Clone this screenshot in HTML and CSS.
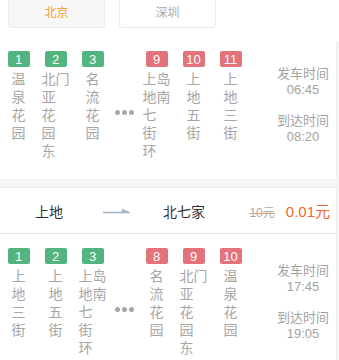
FILE: index.html
```html
<!DOCTYPE html>
<html lang="zh-CN">
<head>
    <meta charset="UTF-8">
    <meta name="viewport" content="width=device-width, initial-scale=1.0">
    <title>班车</title>
    <link rel="stylesheet" href="styles.css">
</head>
<body>
    <div class="tabs">
        <div class="tab active">北京</div>
        <div class="tab">深圳</div>
    </div>

    <div class="card">
        <div class="body first">
            <div class="route">
                <div class="stop"><span class="num go">1</span><span class="name">温<br>泉<br>花<br>园</span></div>
                <div class="stop"><span class="num go">2</span><span class="name">北门<br>亚<br>花<br>园<br>东</span></div>
                <div class="stop"><span class="num go">3</span><span class="name">名<br>流<br>花<br>园</span></div>
                <div class="more"><i></i><i></i><i></i></div>
                <div class="stop"><span class="num off">9</span><span class="name">上岛<br>地南<br>七<br>街<br>环</span></div>
                <div class="stop"><span class="num off">10</span><span class="name">上<br>地<br>五<br>街</span></div>
                <div class="stop"><span class="num off">11</span><span class="name">上<br>地<br>三<br>街</span></div>
            </div>
            <div class="times">
                <p>发车时间</p>
                <p class="t">06:45</p>
                <p class="arrive">到达时间</p>
                <p class="t">08:20</p>
            </div>
        </div>
    </div>

    <div class="card">
        <div class="trip">
            <span class="from">上地</span>
            <span class="arrow">
                <svg width="27" height="6" viewBox="0 0 27 6">
                    <path d="M0 4.5H27" stroke="#a3b6c9" stroke-width="1.6"/>
                    <path d="M19 0.5L27 4.5H19Z" fill="#a3b6c9"/>
                </svg>
            </span>
            <span class="to">北七家</span>
            <span class="price"><s>10元</s><b>0.01元</b></span>
        </div>
        <div class="body">
            <div class="route">
                <div class="stop"><span class="num go">1</span><span class="name">上<br>地<br>三<br>街</span></div>
                <div class="stop"><span class="num go">2</span><span class="name">上<br>地<br>五<br>街</span></div>
                <div class="stop"><span class="num go">3</span><span class="name">上岛<br>地南<br>七<br>街<br>环</span></div>
                <div class="more"><i></i><i></i><i></i></div>
                <div class="stop"><span class="num off">8</span><span class="name">名<br>流<br>花<br>园</span></div>
                <div class="stop"><span class="num off">9</span><span class="name">北门<br>亚<br>花<br>园<br>东</span></div>
                <div class="stop"><span class="num off">10</span><span class="name">温<br>泉<br>花<br>园</span></div>
            </div>
            <div class="times">
                <p>发车时间</p>
                <p class="t">17:45</p>
                <p class="arrive">到达时间</p>
                <p class="t">19:05</p>
            </div>
        </div>
    </div>
</body>
</html>
```

FILE: styles.css
```css
body {
    margin: 0;
    background-color: #f5f5f5;
    font-family: "Liberation Sans", "Noto Sans CJK SC", sans-serif;
    overflow: hidden;
}

p {
    margin: 0;
}

/* 城市切换 */
.tabs {
    display: flex;
    gap: 14px;
    padding: 0 0 14px 8px;
    margin-top: -4px;
    background-color: #fff;
}

.tab {
    width: 95px;
    height: 30px;
    line-height: 32px;
    text-align: center;
    font-size: 12px;
    color: #aaa;
    background-color: #fff;
    border: 1px solid #ececec;
    border-radius: 3px;
}

.tab.active {
    color: #f3a33c;
    background-color: #f7f7f7;
}

/* 线路卡片 */
.card {
    width: 336px;
    background-color: #fff;
    border-right: 1px solid #ebebeb;
    margin-bottom: 8px;
}

.trip {
    display: grid;
    grid-template-columns: 98px 36px 100px 1fr;
    align-items: center;
    height: 45px;
    border-top: 1px solid #ececec;
    border-bottom: 1px solid #e6e6e6;
    font-size: 14px;
    color: #333;
    text-align: center;
}

.arrow {
    display: flex;
    justify-content: center;
    padding-top: 1px;
}

.price {
    display: flex;
    justify-content: flex-end;
    align-items: baseline;
    gap: 11px;
    padding-right: 6px;
}

.price s {
    font-size: 12px;
    color: #aaa;
    text-decoration-color: #dc9c7e;
}

.price b {
    font-weight: normal;
    font-size: 15px;
    color: #f0692c;
}

.body {
    display: flex;
    padding: 14px 0 19px 0;
}

.body.first {
    padding-top: 9px;
}

.route {
    display: flex;
}

.stop {
    width: 37px;
    display: flex;
    flex-direction: column;
    align-items: center;
}

.num {
    width: 22px;
    height: 16px;
    line-height: 17px;
    border-radius: 2px;
    font-size: 13px;
    color: #fff;
    text-align: center;
    margin-bottom: 3px;
}

.num.go {
    background-color: #52b57f;
}

.num.off {
    background-color: #e3727b;
}

.name {
    font-size: 14px;
    line-height: 18px;
    color: #a6a6a6;
    text-align: left;
}

.more {
    width: 27px;
    display: flex;
    justify-content: center;
    gap: 2px;
    padding-top: 59px;
}

.more i {
    width: 5px;
    height: 5px;
    border-radius: 50%;
    background-color: #a8a8a8;
}

.times {
    margin-left: auto;
    width: 66px;
    padding-top: 15px;
    text-align: center;
    font-size: 13px;
    line-height: 16px;
    color: #a3a3a3;
}

.times .arrive {
    margin-top: 15px;
}
```
